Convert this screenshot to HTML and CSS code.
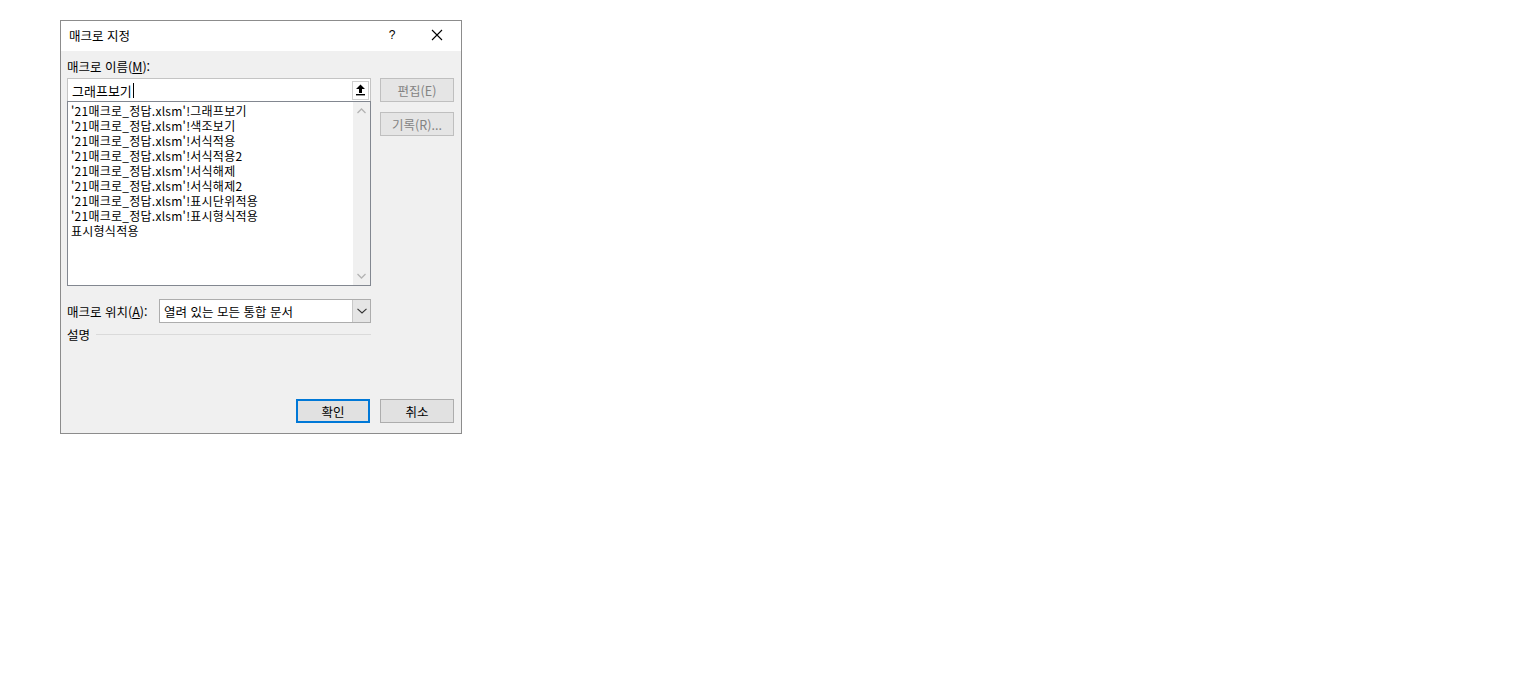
FILE: index.html
```html
<!DOCTYPE html>
<html lang="ko">
<head>
<meta charset="utf-8">
<title>매크로 지정</title>
<link rel="stylesheet" href="styles.css">
</head>
<body>
<div class="dialog">
  <div class="titlebar">
    <span class="title">매크로 지정</span>
    <span class="help">?</span>
    <span class="close">
      <svg width="12" height="12" viewBox="0 0 12 12"><path d="M1 1L11 11M11 1L1 11" stroke="#000" stroke-width="1.1" fill="none"/></svg>
    </span>
  </div>
  <div class="content">
    <div class="top">
      <div class="left">
        <div class="label">매크로 이름(<u>M</u>):</div>
        <div class="namebox">
          <span class="nametext">그래프보기<span class="caret"></span></span>
          <span class="upbtn">
            <svg width="11" height="12" viewBox="0 0 11 12"><path d="M5.5 0.5L10 5H7V9H4V5H1Z" fill="#000"/><rect x="1" y="10" width="9" height="1.4" fill="#000"/></svg>
          </span>
        </div>
        <div class="list">
          <div class="items">
            <div class="item">'21매크로_정답.xlsm'!그래프보기</div>
            <div class="item">'21매크로_정답.xlsm'!색조보기</div>
            <div class="item">'21매크로_정답.xlsm'!서식적용</div>
            <div class="item">'21매크로_정답.xlsm'!서식적용2</div>
            <div class="item">'21매크로_정답.xlsm'!서식해제</div>
            <div class="item">'21매크로_정답.xlsm'!서식해제2</div>
            <div class="item">'21매크로_정답.xlsm'!표시단위적용</div>
            <div class="item">'21매크로_정답.xlsm'!표시형식적용</div>
            <div class="item">표시형식적용</div>
          </div>
          <div class="scrollbar">
            <svg width="9" height="6" viewBox="0 0 9 6"><path d="M0.5 5L4.5 1L8.5 5" stroke="#b4b4b4" stroke-width="1.3" fill="none"/></svg>
            <svg width="9" height="6" viewBox="0 0 9 6"><path d="M0.5 1L4.5 5L8.5 1" stroke="#b4b4b4" stroke-width="1.3" fill="none"/></svg>
          </div>
        </div>
      </div>
      <div class="right">
        <div class="btn disabled">편집(E)</div>
        <div class="btn disabled">기록(R)...</div>
      </div>
    </div>
    <div class="location">
      <span class="label">매크로 위치(<u>A</u>):</span>
      <div class="select">
        <span class="selecttext">열려 있는 모든 통합 문서</span>
        <span class="dropbtn">
          <svg width="10" height="6" viewBox="0 0 10 6"><path d="M0.5 0.8L5 5L9.5 0.8" stroke="#333" stroke-width="1.1" fill="none"/></svg>
        </span>
      </div>
    </div>
    <div class="desc">
      <span class="label">설명</span>
      <span class="rule"></span>
    </div>
    <div class="footer">
      <div class="btn default">확인</div>
      <div class="btn">취소</div>
    </div>
  </div>
</div>
</body>
</html>
```

FILE: styles.css
```css
html, body {
  margin: 0;
  padding: 0;
  background: #ffffff;
}

body {
  font-family: "Noto Sans CJK KR", "Noto Sans", "Liberation Sans", sans-serif;
  font-size: 12.5px;
  color: #000;
}

.dialog {
  margin: 20px 0 0 60px;
  width: 400px;
  height: 412px;
  border: 1px solid #8c8c8c;
  background: #f0f0f0;
  display: flex;
  flex-direction: column;
}

.titlebar {
  height: 30px;
  background: #ffffff;
  display: flex;
  align-items: center;
  padding-left: 8px;
  flex-shrink: 0;
}

.title {
  flex: 1;
  line-height: 15px;
  margin-top: -2px;
}

.help {
  width: 14px;
  text-align: center;
  font-family: "Liberation Sans", sans-serif;
  font-size: 12px;
  margin-right: 32px;
  margin-top: -2px;
}

.close {
  width: 12px;
  height: 12px;
  margin-right: 18px;
  margin-top: -2px;
  display: flex;
}

.content {
  flex: 1;
  display: flex;
  flex-direction: column;
  padding: 8px 7px 0 6px;
}

.top {
  display: flex;
  gap: 9px;
}

.left {
  width: 304px;
  display: flex;
  flex-direction: column;
}

.label {
  line-height: 15px;
  white-space: nowrap;
}

.left > .label {
  margin-bottom: 4px;
}

.namebox {
  height: 22px;
  background: #fff;
  border: 1px solid #c4c4c4;
  border-bottom: none;
  display: flex;
  align-items: center;
  padding-left: 4px;
}

.nametext {
  flex: 1;
  display: flex;
  align-items: center;
  line-height: 15px;
  font-size: 13px;
}

.caret {
  display: inline-block;
  width: 1px;
  height: 15px;
  background: #000;
  margin-left: 1px;
}

.upbtn {
  width: 17px;
  height: 19px;
  margin-right: 1px;
  border: 1px solid #d0d0d0;
  box-sizing: border-box;
  display: flex;
  align-items: center;
  justify-content: center;
  background: #fff;
}

.list {
  height: 183px;
  border: 1px solid #828790;
  background: #fff;
  display: flex;
}

.items {
  flex: 1;
  padding: 1px 0 0 3px;
}

.item {
  font-size: 12px;
  letter-spacing: 0.25px;
  line-height: 15px;
  height: 15px;
  white-space: nowrap;
}

.scrollbar {
  width: 17px;
  background: #f0f0f0;
  display: flex;
  flex-direction: column;
  justify-content: space-between;
  align-items: center;
  padding: 6px 0 6px;
}

.right {
  width: 74px;
  display: flex;
  flex-direction: column;
  gap: 10px;
  padding-top: 19px;
}

.btn {
  height: 24px;
  box-sizing: border-box;
  border: 1px solid #adadad;
  background: #e1e1e1;
  display: flex;
  align-items: center;
  justify-content: center;
  line-height: 15px;
  width: 74px;
}

.btn.disabled {
  color: #838383;
  border-color: #bfbfbf;
  background: #e5e5e5;
}

.btn.default {
  border: 2px solid #0078d7;
}

.location {
  width: 304px;
  display: flex;
  align-items: center;
  margin-top: 13px;
}

.select {
  width: 212px;
  height: 24px;
  box-sizing: border-box;
  border: 1px solid #adadad;
  background: #fff;
  display: flex;
  align-items: center;
  margin-left: auto;
}

.selecttext {
  flex: 1;
  padding-left: 4px;
  line-height: 15px;
}

.dropbtn {
  width: 17px;
  height: 22px;
  background: #e5e5e5;
  border-left: 1px solid #c8c8c8;
  display: flex;
  align-items: center;
  justify-content: center;
}

.desc {
  width: 304px;
  display: flex;
  align-items: center;
  margin-top: 4px;
  gap: 6px;
}

.rule {
  flex: 1;
  height: 1px;
  background: #dadada;
}

.footer {
  margin-top: auto;
  margin-bottom: 10px;
  display: flex;
  justify-content: flex-end;
  gap: 10px;
}
```
